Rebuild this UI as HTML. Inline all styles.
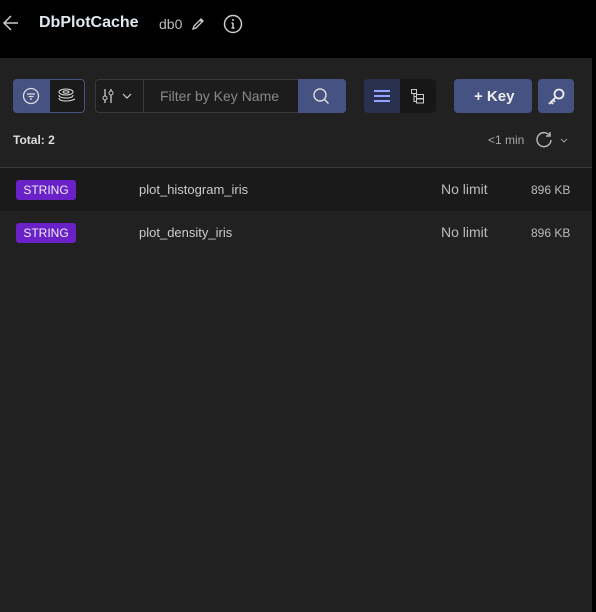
<!DOCTYPE html>
<html><head><style>
*{margin:0;padding:0;box-sizing:border-box}
body{width:596px;height:612px;background:#000;font-family:"Liberation Sans",sans-serif;position:relative;overflow:hidden;color:#ddd}
.a{position:absolute}
.panel{left:0;top:58px;width:592px;height:554px;background:#212121}
.btn{background:#465282;border-radius:4px}
.t{white-space:nowrap}
</style></head><body>
<svg class="a" style="left:2px;top:14px" width="18" height="18" viewBox="0 0 18 18"><path d="M16 9H2M9 2L2 9l7 7" stroke="#ccc" stroke-width="1.5" fill="none"/></svg>
<div class="a t" style="left:39px;top:14px;font-size:16px;font-weight:bold;color:#e2e8f0">DbPlotCache</div>
<div class="a t" style="left:159px;top:16px;font-size:14px;color:#bbb">db0</div>
<svg class="a" style="left:190px;top:16px" width="16" height="16" viewBox="0 0 16 16"><path d="M3 13l1-3 7-7 2 2-7 7zM10 4l2 2" stroke="#ccc" stroke-width="1.3" fill="none"/></svg>
<svg class="a" style="left:223px;top:14px" width="20" height="20" viewBox="0 0 20 20"><circle cx="10" cy="10" r="8.5" stroke="#ccc" stroke-width="1.5" fill="none"/><path d="M10 9v5M8.5 14h3M8.5 9H10" stroke="#ccc" stroke-width="1.5"/><circle cx="10" cy="6" r="1" fill="#ccc"/></svg>
<div class="a panel"></div>
<div class="a" style="left:13px;top:79px;width:72px;height:34px;border:1px solid #465282;border-radius:4px;background:#1a1a1a"></div>
<div class="a" style="left:13px;top:79px;width:37px;height:34px;background:#465282;border-radius:4px 0 0 4px"></div>
<svg class="a" style="left:22px;top:87px" width="18" height="18" viewBox="0 0 18 18"><circle cx="9" cy="9" r="7.5" stroke="#ddd" stroke-width="1.3" fill="none"/><path d="M5 7h8M6.5 9.5h5M8 12h2" stroke="#ddd" stroke-width="1.3"/></svg>
<svg class="a" style="left:57px;top:87px" width="20" height="16" viewBox="0 0 20 16"><ellipse cx="9" cy="5" rx="7" ry="3" stroke="#ddd" fill="none"/><ellipse cx="9" cy="5" rx="3" ry="1.2" stroke="#ddd" fill="none"/><path d="M2 8c0 2 3 3 7 3s7-1 7-3M2 11c0 2 3 3 7 3s7-1 9-2" stroke="#ddd" fill="none"/></svg>
<div class="a" style="left:95px;top:79px;width:251px;height:34px;border:1px solid #3a3a3a;border-radius:4px;background:#1c1c1c"></div>
<div class="a" style="left:143px;top:79px;width:1px;height:34px;background:#3a3a3a"></div>
<svg class="a" style="left:102px;top:87px" width="32" height="18" viewBox="0 0 32 18"><path d="M3 2v14M9 2v14" stroke="#ccc" stroke-width="1.3"/><circle cx="3" cy="11" r="2" fill="#1c1c1c" stroke="#ccc"/><circle cx="9" cy="6" r="2" fill="#1c1c1c" stroke="#ccc"/><path d="M21 7l4 4 4-4" stroke="#ccc" stroke-width="1.2" fill="none"/></svg>
<div class="a t" style="left:160px;top:88px;font-size:14px;color:#888">Filter by Key Name</div>
<div class="a" style="left:298px;top:79px;width:48px;height:34px;background:#465282;border-radius:0 4px 4px 0"></div>
<svg class="a" style="left:312px;top:87px" width="20" height="18" viewBox="0 0 20 18"><circle cx="8" cy="8" r="6" stroke="#ddd" stroke-width="1.4" fill="none"/><path d="M12.5 12.5l4 4" stroke="#ddd" stroke-width="1.4"/></svg>
<div class="a" style="left:364px;top:79px;width:36px;height:34px;background:#2a3150;border-radius:4px 0 0 4px"></div>
<div class="a" style="left:400px;top:79px;width:36px;height:34px;background:#171717;border-radius:0 4px 4px 0"></div>
<svg class="a" style="left:373px;top:88px" width="18" height="16" viewBox="0 0 18 16"><path d="M1 3h16M1 8h16M1 13h16" stroke="#8fa3ff" stroke-width="2"/></svg>
<svg class="a" style="left:410px;top:88px" width="16" height="16" viewBox="0 0 16 16"><path d="M1.5 1.5h5v4h-5zM6.5 6.5h7v4h-7zM6.5 11h7v4h-7zM4 5.5v8h2.5M4 8.5h2.5" stroke="#ccc" fill="none"/></svg>
<div class="a btn" style="left:454px;top:79px;width:78px;height:34px"></div>
<div class="a t" style="left:474px;top:88px;font-size:15px;font-weight:bold;color:#eee">+ Key</div>
<div class="a btn" style="left:538px;top:79px;width:36px;height:34px"></div>
<svg class="a" style="left:546px;top:87px" width="20" height="20" viewBox="0 0 20 20"><circle cx="13" cy="7" r="4.5" stroke="#eee" stroke-width="1.8" fill="none"/><path d="M10 10l-7 7M5 15l2 2M7 13l2 2" stroke="#eee" stroke-width="1.8"/></svg>
<div class="a t" style="left:13px;top:133px;font-size:12px;font-weight:bold;color:#ddd">Total: 2</div>
<div class="a t" style="left:488px;top:133px;font-size:12px;color:#aaa">&lt;1 min</div>
<svg class="a" style="left:535px;top:130px" width="40" height="20" viewBox="0 0 40 20"><path d="M15 6A7 7 0 1 0 16 10" stroke="#bbb" stroke-width="1.4" fill="none"/><path d="M15 2v4h-4" stroke="#bbb" stroke-width="1.4" fill="none"/><path d="M26 9l3 3 3-3" stroke="#999" fill="none"/></svg>
<div class="a" style="left:0;top:167px;width:592px;height:1px;background:#3a3a3a"></div>
<div class="a" style="left:0;top:168px;width:592px;height:43px;background:#1a1a1a"></div>
<div class="a t" style="left:16px;top:180px;width:60px;height:20px;background:#6b21c8;border-radius:3px;font-size:12px;color:#eee;text-align:center;line-height:20px">STRING</div>
<div class="a t" style="left:139px;top:182px;font-size:13px;color:#ccc">plot_histogram_iris</div>
<div class="a t" style="left:441px;top:181px;font-size:14px;color:#bbb">No limit</div>
<div class="a t" style="left:531px;top:183px;font-size:12px;color:#bbb">896 KB</div>
<div class="a t" style="left:16px;top:223px;width:60px;height:20px;background:#6b21c8;border-radius:3px;font-size:12px;color:#eee;text-align:center;line-height:20px">STRING</div>
<div class="a t" style="left:139px;top:225px;font-size:13px;color:#ccc">plot_density_iris</div>
<div class="a t" style="left:441px;top:224px;font-size:14px;color:#bbb">No limit</div>
<div class="a t" style="left:531px;top:226px;font-size:12px;color:#bbb">896 KB</div>
</body></html>
